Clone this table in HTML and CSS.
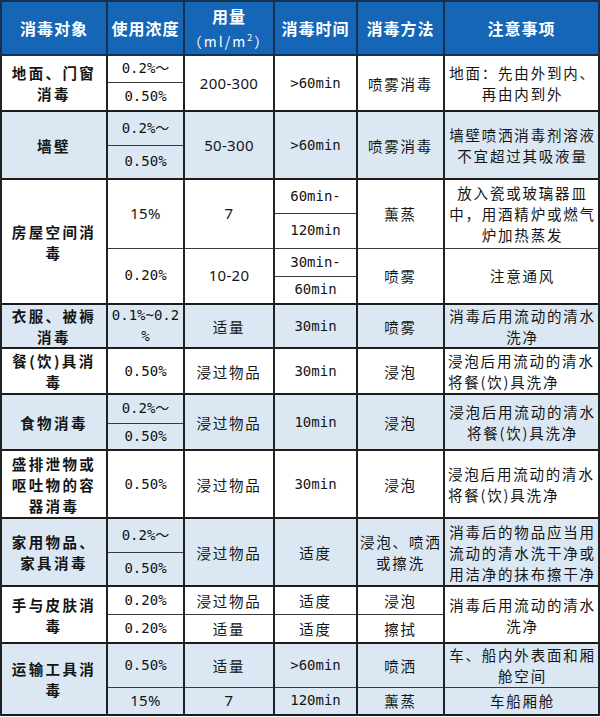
FILE: index.html
```html
<!DOCTYPE html>
<html lang="zh">
<head>
<meta charset="utf-8">
<title>消毒方法</title>
<link rel="stylesheet" href="styles.css">
</head>
<body>
<table class="tbl">
<colgroup>
<col class="c1"><col class="c2"><col class="c3"><col class="c4"><col class="c5"><col class="c6">
</colgroup>
<thead>
<tr class="hrow">
<th>消毒对象</th>
<th>使用浓度</th>
<th><div class="h1">用量</div><div class="h2">（ml/m<sup>2</sup>）</div></th>
<th>消毒时间</th>
<th>消毒方法</th>
<th>注意事项</th>
</tr>
</thead>
<tbody>
<tr class="g w r27">
<td class="obj" rowspan="2">地面、门窗<br>消毒</td>
<td class="num">0.2%～</td>
<td rowspan="2" class="amt">200-300</td>
<td rowspan="2" class="num">&gt;60min</td>
<td rowspan="2">喷雾消毒</td>
<td rowspan="2" class="note">地面：先由外到内、<br>再由内到外</td>
</tr>
<tr class="w r29"><td class="num">0.50%</td></tr>

<tr class="g b r34">
<td class="obj" rowspan="2">墙壁</td>
<td class="num">0.2%～</td>
<td rowspan="2" class="amt">50-300</td>
<td rowspan="2" class="num">&gt;60min</td>
<td rowspan="2">喷雾消毒</td>
<td rowspan="2" class="note">墙壁喷洒消毒剂溶液<br>不宜超过其吸液量</td>
</tr>
<tr class="b r34"><td class="num">0.50%</td></tr>

<tr class="g w r34">
<td class="obj" rowspan="4">房屋空间消<br>毒</td>
<td rowspan="2" class="amt">15%</td>
<td rowspan="2" class="amt">7</td>
<td class="num">60min-</td>
<td rowspan="2">薰蒸</td>
<td rowspan="2" class="note">放入瓷或玻璃器皿<br>中，用酒精炉或燃气<br>炉加热蒸发</td>
</tr>
<tr class="w r35"><td class="num">120min</td></tr>
<tr class="w r28 s">
<td rowspan="2" class="num">0.20%</td>
<td rowspan="2" class="amt">10-20</td>
<td class="num">30min-</td>
<td rowspan="2">喷雾</td>
<td rowspan="2" class="note">注意通风</td>
</tr>
<tr class="w r28"><td class="num">60min</td></tr>

<tr class="g b r43">
<td class="obj">衣服、被褥<br>消毒</td>
<td class="num">0.1%~0.2<br>%</td>
<td>适量</td>
<td class="num">30min</td>
<td>喷雾</td>
<td class="note">消毒后用流动的清水<br>洗净</td>
</tr>

<tr class="g w r46">
<td class="obj">餐(饮)具消<br>毒</td>
<td class="num">0.50%</td>
<td>浸过物品</td>
<td class="num">30min</td>
<td>浸泡</td>
<td class="note left">浸泡后用流动的清水<br>将餐(饮)具洗净</td>
</tr>

<tr class="g b r29">
<td class="obj" rowspan="2">食物消毒</td>
<td class="num">0.2%～</td>
<td rowspan="2">浸过物品</td>
<td rowspan="2" class="num">10min</td>
<td rowspan="2">浸泡</td>
<td rowspan="2" class="note">浸泡后用流动的清水<br>将餐(饮)具洗净</td>
</tr>
<tr class="b r27"><td class="num">0.50%</td></tr>

<tr class="g w r68">
<td class="obj">盛排泄物或<br>呕吐物的容<br>器消毒</td>
<td class="num">0.50%</td>
<td>浸过物品</td>
<td class="num">30min</td>
<td>浸泡</td>
<td class="note left">浸泡后用流动的清水<br>将餐(饮)具洗净</td>
</tr>

<tr class="g b r34">
<td class="obj" rowspan="2">家用物品、<br>家具消毒</td>
<td class="num">0.2%～</td>
<td rowspan="2">浸过物品</td>
<td rowspan="2">适度</td>
<td rowspan="2">浸泡、喷洒<br>或擦洗</td>
<td rowspan="2" class="note">消毒后的物品应当用<br>流动的清水洗干净或<br>用洁净的抹布擦干净</td>
</tr>
<tr class="b r34"><td class="num">0.50%</td></tr>

<tr class="g w r28">
<td class="obj" rowspan="2">手与皮肤消<br>毒</td>
<td class="num">0.20%</td>
<td>浸过物品</td>
<td>适度</td>
<td>浸泡</td>
<td rowspan="2" class="note">消毒后用流动的清水<br>洗净</td>
</tr>
<tr class="w r29">
<td class="num">0.20%</td>
<td>适量</td>
<td>适度</td>
<td>擦拭</td>
</tr>

<tr class="g b r44">
<td class="obj" rowspan="2">运输工具消<br>毒</td>
<td class="num">0.50%</td>
<td>适量</td>
<td class="num">&gt;60min</td>
<td>喷洒</td>
<td class="note">车、船内外表面和厢<br>舱空间</td>
</tr>
<tr class="b r28">
<td class="amt">15%</td>
<td class="amt">7</td>
<td class="num">120min</td>
<td>薰蒸</td>
<td class="note">车船厢舱</td>
</tr>
</tbody>
</table>
</body>
</html>
```
FILE: styles.css
```css
html, body {
  margin: 0;
  padding: 0;
  background: #ffffff;
}
body {
  font-family: "Noto Sans CJK SC", "Noto Sans", sans-serif;
  color: #141414;
}
.tbl {
  width: 598px;
  table-layout: fixed;
  border-collapse: collapse;
  border: 2px solid #1c1c1c;
}
.c1 { width: 106px; }
.c2 { width: 77px; }
.c3 { width: 90px; }
.c4 { width: 83px; }
.c5 { width: 87px; }
.c6 { width: 155px; }

.tbl th {
  background: #1566b6;
  color: #ffffff;
  font-weight: bold;
  font-size: 16px;
  letter-spacing: 1px;
  border: 2px solid #16314f;
  padding: 0;
  height: 52px;
  text-align: center;
  vertical-align: middle;
  white-space: nowrap;
}
.h1 { line-height: 26px; }
.h2 {
  line-height: 24px;
  font-size: 14px;
  font-weight: normal;
  letter-spacing: 2px;
}
.h2 sup { font-size: 9px; line-height: 0; }

.tbl td {
  border: 1px solid #3a3a3a;
  border-left: 2px solid #222222;
  border-right: 2px solid #222222;
  padding: 0 2px;
  text-align: center;
  vertical-align: middle;
  font-size: 14.5px;
  line-height: 21px;
  letter-spacing: 1.8px;
  white-space: nowrap;
  overflow: hidden;
}
.tbl tr.g > td { border-top: 2px solid #1c1c1c; }
.tbl tr.w > td { background: #ffffff; }
.tbl tr.b > td { background: #dbe8f3; }

.tbl td.obj {
  font-weight: bold;
  font-size: 14.5px;
  letter-spacing: 2.4px;
  line-height: 21px;
}
.tbl td.num {
  font-family: "DejaVu Sans Mono", "Noto Sans CJK SC", monospace;
  font-size: 14px;
  line-height: 21px;
  letter-spacing: 0;
}
.tbl td.amt {
  font-family: "Noto Sans", "Noto Sans CJK SC", sans-serif;
  font-size: 15px;
  letter-spacing: 0.3px;
}
.tbl td.note { padding: 0 1px 0 3px; }
.tbl td.note.left { text-align: left; }

.r27 { height: 27px; }
.r28 { height: 28px; }
.r29 { height: 29px; }
.r34 { height: 34px; }
.r35 { height: 35px; }
.r43 { height: 43px; }
.r44 { height: 44px; }
.r46 { height: 46px; }
.r68 { height: 68px; }
```
